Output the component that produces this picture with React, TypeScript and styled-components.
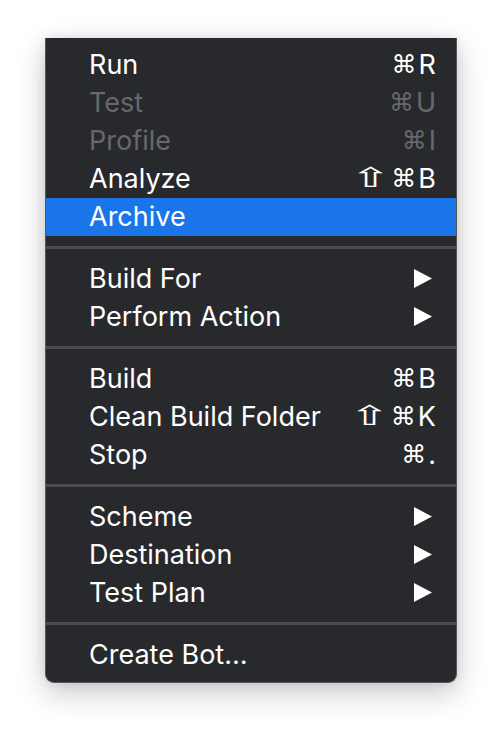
import React from "react";
import styled, { createGlobalStyle } from "styled-components";

const Global = createGlobalStyle`
  html, body { margin: 0; padding: 0; background: #ffffff; }
  body { font-family: Inter, "Noto Sans", sans-serif; }
`;

const Page = styled.div`
  width: 502px;
  height: 736px;
  padding: 38px 0 0 45px;
  box-sizing: border-box;
  background: #ffffff;
`;

const Menu = styled.div`
  width: 412px;
  box-sizing: border-box;
  background: #28292d;
  border: 1px solid #55565a;
  border-top: none;
  border-radius: 0 0 9px 9px;
  padding: 8px 0;
  box-shadow: 0 10px 30px rgba(0, 0, 0, 0.22), 0 0 12px rgba(0, 0, 0, 0.08);
  display: flex;
  flex-direction: column;
`;

const Row = styled.div<{ $disabled?: boolean; $active?: boolean }>`
  height: 38px;
  box-sizing: border-box;
  display: flex;
  align-items: center;
  justify-content: space-between;
  padding: 0 20px 2px 43px;
  background: ${(p) => (p.$active ? "#1a76e8" : "transparent")};
  color: ${(p) => (p.$disabled ? "#67686c" : "#ffffff")};
`;

const Label = styled.span`
  font-size: 27px;
  font-weight: 400;
  line-height: 1;
`;

const Shortcut = styled.span`
  font-family: Inter, "DejaVu Sans", sans-serif;
  font-size: 27px;
  font-weight: 400;
  line-height: 1;
  display: flex;
  align-items: center;
`;

const Sym = styled.span`
  font-family: "DejaVu Sans", sans-serif;
  font-size: 25px;
  margin-right: 2px;
`;

const Shift = styled.span`
  font-family: "DejaVu Sans", sans-serif;
  font-size: 26px;
  display: inline-block;
  transform: scale(1.9, 1.05);
  margin: 0 10px 0 6px;
`;

const Arrow = styled.svg`
  width: 18px;
  height: 19px;
  margin-right: 4px;
  display: block;
`;

const Separator = styled.div`
  height: 24px;
  display: flex;
  flex-direction: column;
  padding-top: 10px;
  box-sizing: border-box;
  &::before {
    content: "";
    display: block;
    height: 3px;
    background: #4b4c50;
  }
`;

type Item =
  | { sep: true }
  | {
      sep?: false;
      label: string;
      shift?: boolean;
      key?: string;
      sub?: boolean;
      disabled?: boolean;
      active?: boolean;
    };

const items: Item[] = [
  { label: "Run", key: "R" },
  { label: "Test", key: "U", disabled: true },
  { label: "Profile", key: "I", disabled: true },
  { label: "Analyze", shift: true, key: "B" },
  { label: "Archive", active: true },
  { sep: true },
  { label: "Build For", sub: true },
  { label: "Perform Action", sub: true },
  { sep: true },
  { label: "Build", key: "B" },
  { label: "Clean Build Folder", shift: true, key: "K" },
  { label: "Stop", key: "." },
  { sep: true },
  { label: "Scheme", sub: true },
  { label: "Destination", sub: true },
  { label: "Test Plan", sub: true },
  { sep: true },
  { label: "Create Bot…" },
];

export default function App() {
  return (
    <>
      <Global />
      <Page>
        <Menu>
          {items.map((it, i) =>
            it.sep ? (
              <Separator key={i} />
            ) : (
              <Row key={i} $disabled={it.disabled} $active={it.active}>
                <Label>{it.label}</Label>
                {it.key && (
                  <Shortcut>
                    {it.shift && <Shift>⇧</Shift>}
                    <Sym>⌘</Sym>
                    {it.key}
                  </Shortcut>
                )}
                {it.sub && (
                  <Arrow viewBox="0 0 18 19">
                    <polygon points="0,0 18,9.5 0,19" fill="#ffffff" />
                  </Arrow>
                )}
              </Row>
            )
          )}
        </Menu>
      </Page>
    </>
  );
}
